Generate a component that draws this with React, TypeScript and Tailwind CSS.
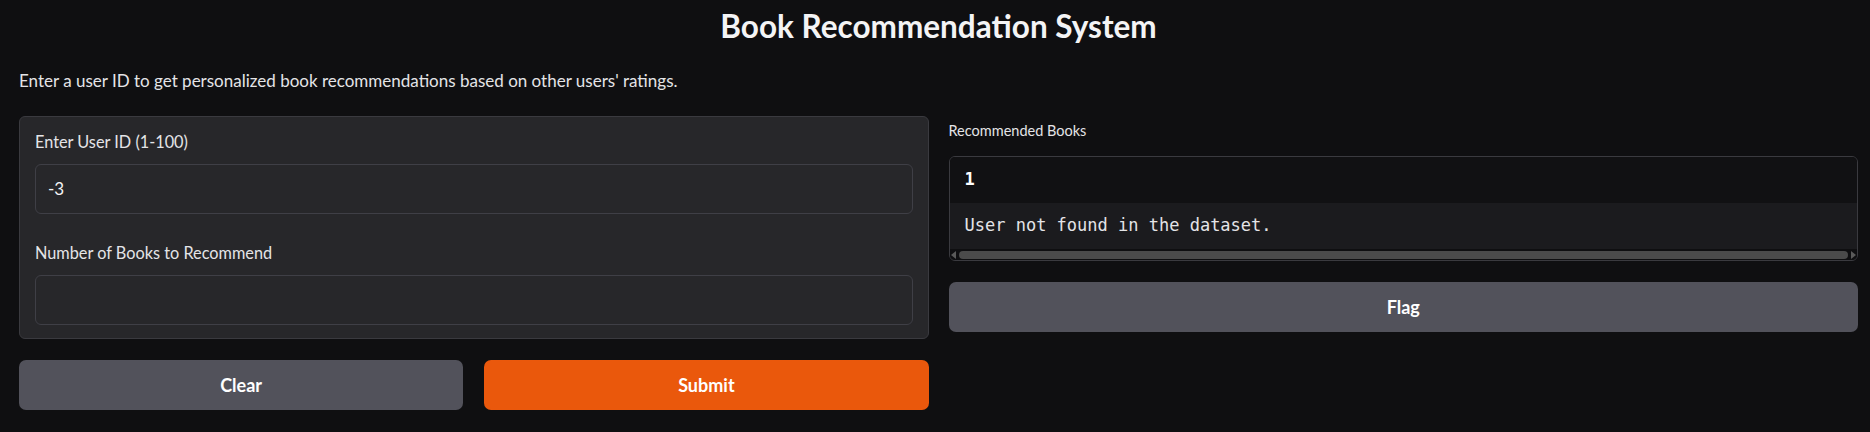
import React from "react";

const sans = "font-['Lato','Noto_Sans',sans-serif]";

const Field: React.FC<{ label: string; value?: string; className?: string }> = ({
  label,
  value,
  className = "",
}) => (
  <div className={className}>
    <label className="block text-[16.3px] leading-[20px] text-[#e4e4e7]">{label}</label>
    <div className="mt-[12px] h-[50px] rounded-[6px] border border-[#3f3f46] bg-[#27272a] px-[12px] flex items-center text-[17px] text-[#f4f4f5]">
      {value}
    </div>
  </div>
);

const ScrollStrip: React.FC = () => (
  <div className="h-[11px] flex items-center gap-[3px] px-[1px] bg-[#0f0f11]">
    <span className="w-0 h-0 border-y-[4px] border-y-transparent border-r-[5px] border-r-[#5a5a5a]" />
    <div className="flex-1 h-[8px] rounded-full bg-[#4b4b4b]" />
    <span className="w-0 h-0 border-y-[4px] border-y-transparent border-l-[5px] border-l-[#5a5a5a]" />
  </div>
);

const App: React.FC = () => {
  return (
    <div className={`min-h-[432px] w-full bg-[#0f0f11] text-white pl-[19px] pr-[12px] ${sans}`}>
      <h1 className="pt-[8px] text-center text-[31.5px] leading-[36px] font-bold text-[#f4f4f5]">
        Book Recommendation System
      </h1>
      <p className="mt-[27px] text-[17px] leading-[20px] text-[#e4e4e7]">
        Enter a user ID to get personalized book recommendations based on other users' ratings.
      </p>

      <div className="mt-[25px] grid grid-cols-2 gap-[20px]">
        {/* inputs */}
        <div>
          <div className="h-[223px] rounded-[6px] border border-[#3a3a3f] bg-[#27272a] px-[15px] pt-[15px]">
            <Field label="Enter User ID (1-100)" value="-3" />
            <Field label="Number of Books to Recommend" className="mt-[29px]" />
          </div>
          <div className="mt-[21px] grid grid-cols-2 gap-[21px]">
            <button className="h-[50px] rounded-[7px] bg-[#52525b] text-[18px] font-bold text-white">
              Clear
            </button>
            <button className="h-[50px] rounded-[7px] bg-[#ea580c] text-[18px] font-bold text-white">
              Submit
            </button>
          </div>
        </div>

        {/* output */}
        <div className="pt-[6px]">
          <div className="text-[14.5px] leading-[18px] text-[#e4e4e7]">Recommended Books</div>
          <div className="mt-[16px] rounded-[6px] border border-[#3a3a3f] overflow-hidden font-['DejaVu_Sans_Mono',monospace]">
            <div className="h-[46px] bg-[#111113] flex items-center px-[15px] text-[17px] font-bold text-white">
              1
            </div>
            <div className="h-[46px] bg-[#1b1b1e] flex items-center px-[15px] text-[17px] text-[#e4e4e7]">
              User not found in the dataset.
            </div>
            <ScrollStrip />
          </div>
          <button className={`mt-[21px] w-full h-[50px] rounded-[7px] bg-[#52525b] text-[18px] font-bold text-white ${sans}`}>
            Flag
          </button>
        </div>
      </div>
    </div>
  );
};

export default App;
